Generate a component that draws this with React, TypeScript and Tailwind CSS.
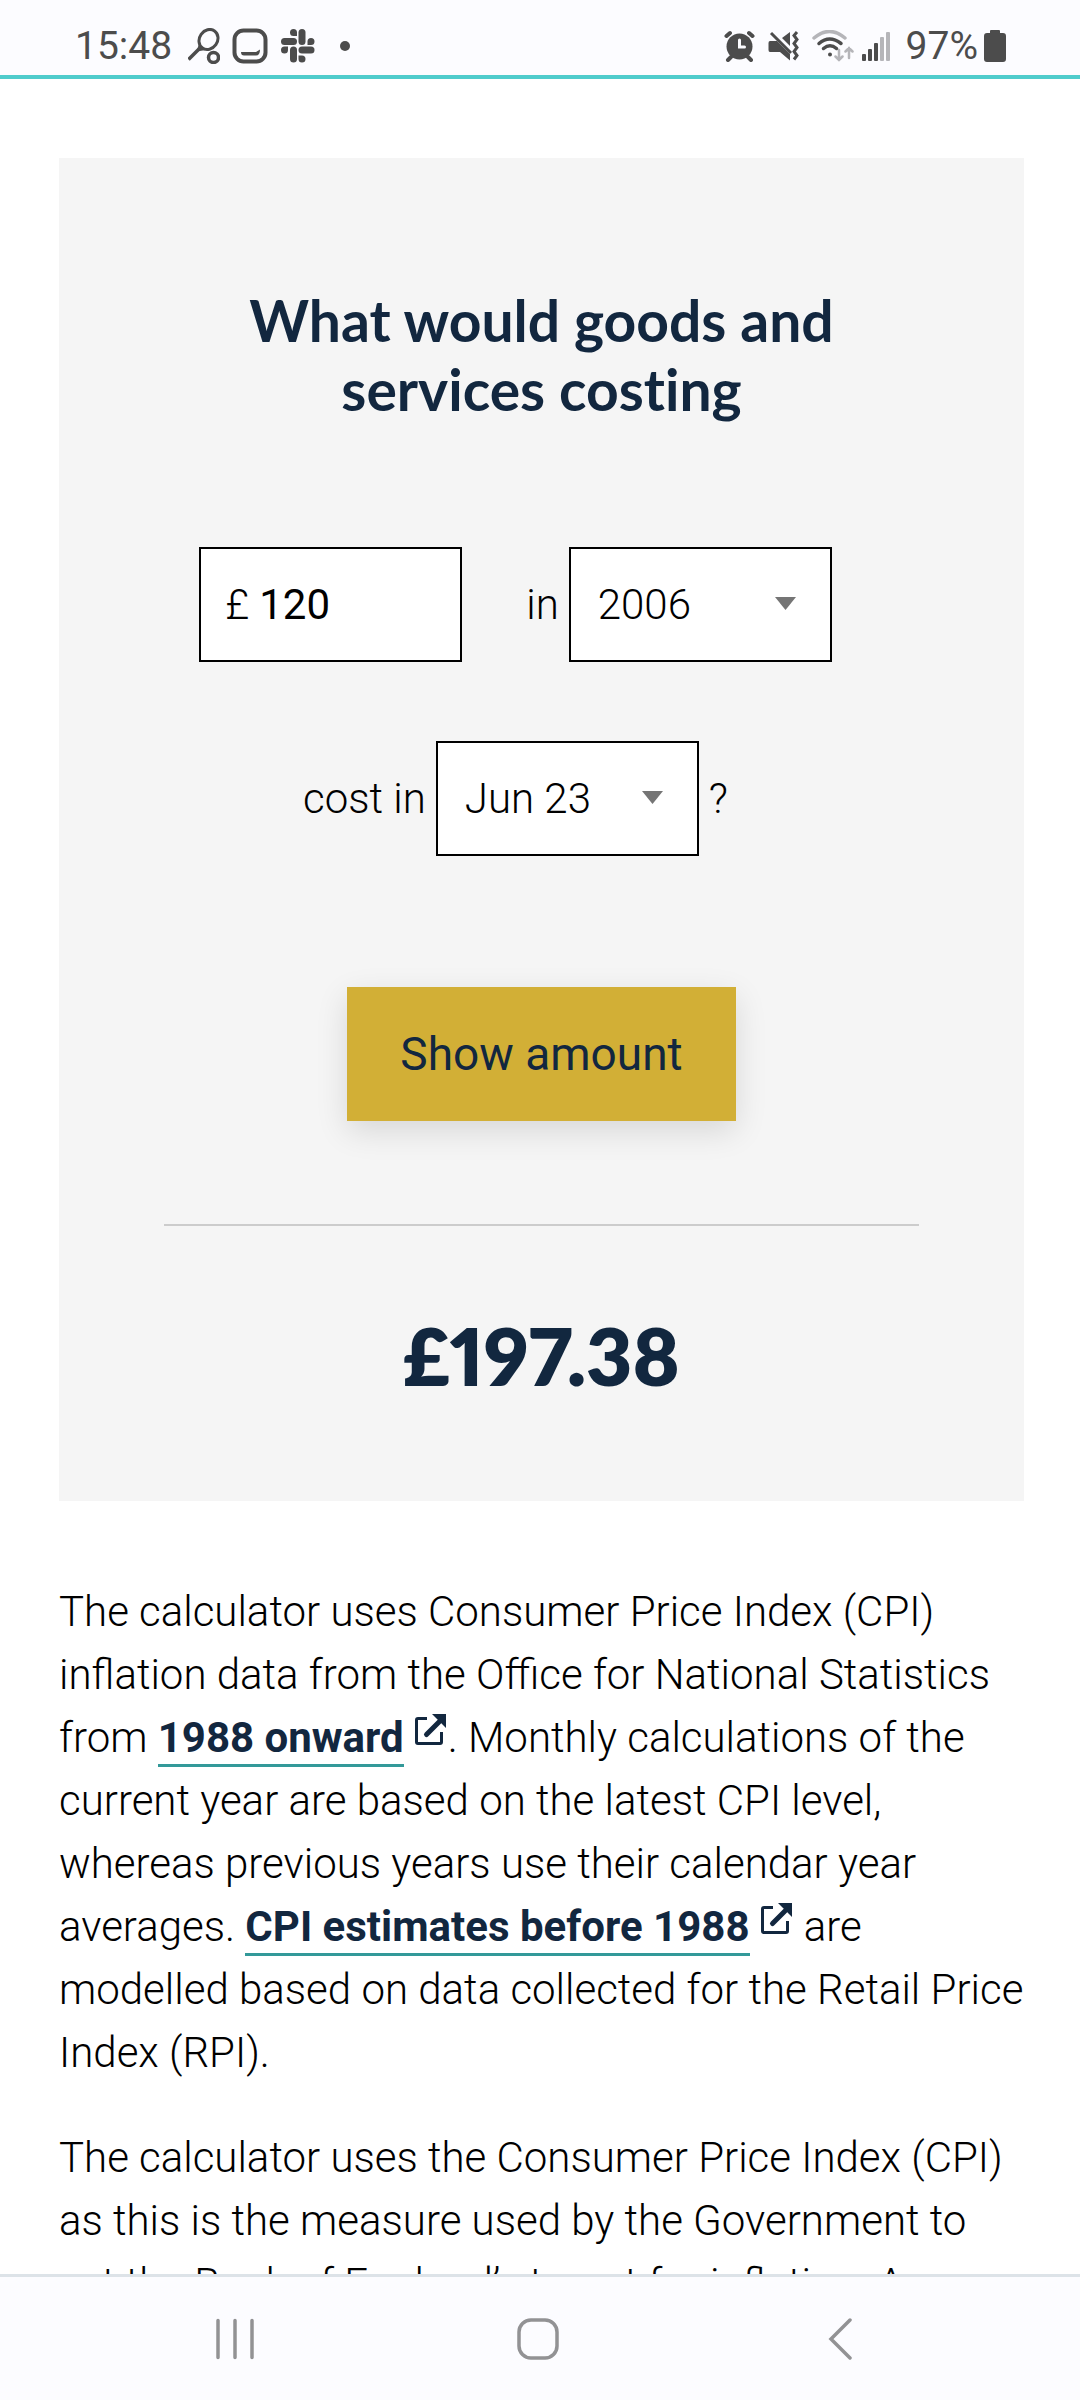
import type { ReactNode } from "react"

const months = ["Jun 23", "May 23", "Apr 23", "Mar 23"]
const years = ["2006", "2005", "2004", "2003"]

function StatusBar() {
  return (
    <header className="flex h-[79px] shrink-0 items-center justify-between border-b-4 border-[#50cccc] bg-[#fcfcff] pt-4 pr-[74px] pl-[75px] text-[#4c4c4c]">
      <div className="flex items-center">
        <span className="text-[39px] leading-[46px]">15:48</span>
        <svg className="ml-4 h-9 w-8" viewBox="0 0 32 36" fill="none" stroke="currentColor" strokeWidth="3">
          <ellipse cx="20.5" cy="11.5" rx="9" ry="10.5" transform="rotate(35 20.5 11.5)" />
          <path d="M12.5 19.5 0.5 31.5" strokeWidth="3.5" />
          <path d="M8.5 23.5 11 16l7 6z" fill="currentColor" strokeWidth="0" />
          <circle cx="25.5" cy="29.5" r="5" strokeWidth="3.5" />
        </svg>
        <svg className="ml-3 h-9 w-9" viewBox="0 0 36 36" fill="none" stroke="currentColor">
          <rect x="2.5" y="2.5" width="31" height="31" rx="9" strokeWidth="4" />
          <path d="M9 24h15l4-2.5q0 6-4 6H12q-3 0-3-3.5z" fill="currentColor" strokeWidth="0" />
        </svg>
        <svg className="ml-3 h-9 w-9" viewBox="0 0 36 36" fill="currentColor">
          <rect x="18.5" y="1" width="7" height="16" rx="3.5" />
          <rect x="1" y="10" width="16" height="7" rx="3.5" />
          <rect x="10" y="18.5" width="7" height="16" rx="3.5" />
          <rect x="18.5" y="18.5" width="16" height="7" rx="3.5" />
          <path d="M17 8V4.5A3.5 3.5 0 1 0 13.5 8zM27.5 17H31a3.5 3.5 0 1 0-3.5-3.5zM8 18.5H4.5A3.5 3.5 0 1 0 8 22zM18.5 27.5V31a3.5 3.5 0 1 0 3.5-3.5z" />
        </svg>
        <span className="ml-6 size-[10px] rounded-full bg-[#4c4c4c]" />
      </div>
      <div className="flex items-center">
        <svg className="h-8 w-8" viewBox="0 0 32 32" fill="none" stroke="currentColor" strokeLinecap="round">
          <circle cx="15.5" cy="16.5" r="13" fill="currentColor" strokeWidth="0" />
          <path d="M2.5 6 6 3M28.5 6 25 3M7 27l-3 3M24 27l3 3" strokeWidth="4" />
          <path d="M15.5 10v7h5" stroke="#fcfcff" strokeWidth="3" />
        </svg>
        <svg className="ml-3 h-8 w-8" viewBox="0 0 32 32">
          <path d="M14 8 22 2v14zM2 11h7l13 13v6.5L12 22H2q-1.5 0-1.5-2v-7q0-2 1.5-2z" fill="currentColor" />
          <path d="m3 3 20 20" stroke="currentColor" strokeWidth="3" />
          <path d="m29 2-3 3.5 3 4-3 4 3 4-3 4 3 4-3 4" fill="none" stroke="currentColor" strokeWidth="3" />
        </svg>
        <svg className="ml-3 h-8 w-[42px]" viewBox="0 0 42 32" fill="none" stroke="currentColor" strokeWidth="3.5" strokeLinecap="round">
          <path d="M2 8q15.5-13 31 0" stroke="#b5b5b9" />
          <path d="M7 13.5q10.5-9 22 0M11.5 18.5q6.5-5.5 13 0" />
          <circle cx="18" cy="24.5" r="2" fill="currentColor" strokeWidth="0" />
          <path d="M27 20v10m-3.5-3.5 3.5 3.5 3.5-3.5M37 28V18m-3.5 3.5L37 18l3.5 3.5" stroke="#b5b5b9" strokeWidth="2.5" />
        </svg>
        <svg className="ml-2 h-8 w-7" viewBox="0 0 28 32" fill="currentColor">
          <rect x="0" y="24" width="4" height="7" rx="1" />
          <rect x="6" y="19" width="4" height="12" rx="1" />
          <rect x="12" y="13" width="4" height="18" rx="1" />
          <rect x="18" y="7" width="4" height="24" rx="1" fill="#b5b5b9" />
          <rect x="24" y="2" width="4" height="29" rx="1" fill="#b5b5b9" />
        </svg>
        <span className="ml-4 text-[39px] leading-[46px]">97%</span>
        <svg className="ml-1.5 h-8 w-[22px]" viewBox="0 0 22 32" fill="currentColor">
          <path d="M6 3V1q0-1 1-1h8q1 0 1 1v2h3q3 0 3 3v23q0 3-3 3H3q-3 0-3-3V6q0-3 3-3z" />
        </svg>
      </div>
    </header>
  )
}

function SelectBox({ label, options }: { label: string; options: string[] }) {
  return (
    <div className="relative">
      <select
        aria-label={label}
        className="h-[115px] w-[263px] appearance-none border-2 border-black bg-white pr-16 pl-[27px] font-light text-black"
      >
        {options.map((option) => (
          <option key={option}>{option}</option>
        ))}
      </select>
      <svg className="pointer-events-none absolute top-[50px] right-9 h-[13px] w-[21px]" viewBox="0 0 21 13" fill="#757575">
        <path d="M0 0h21L10.5 13z" />
      </svg>
    </div>
  )
}

function ExternalLink({ href, children }: { href: string; children: ReactNode }) {
  return (
    <a href={href} className="font-bold text-[#12273f]">
      <span className="border-b-3 border-[#339999] pb-0.5">{children}</span>
      <svg className="mr-0.5 ml-2.5 inline-block h-8 w-8 align-[6px]" viewBox="0 0 32 32" fill="none" stroke="currentColor" strokeWidth="3">
        <path d="M13 4.5H4Q2.5 4.5 2.5 6v22q0 1.5 1.5 1.5h22q1.5 0 1.5-1.5V18" />
        <path d="M12.5 20.5 25 8" strokeWidth="5" strokeLinecap="round" />
        <path d="M18 0h14v14z" fill="currentColor" strokeWidth="0" />
      </svg>
    </a>
  )
}

function Calculator() {
  return (
    <form className="bg-[#f5f5f5] px-[105px] pt-32 pb-[101px]" onSubmit={(e) => e.preventDefault()}>
      <h2 className="text-center font-[Lato,sans-serif] text-[57px] leading-[69px] font-bold text-[#12273f] [font-variant-ligatures:none]">
        What would goods and
        <br />
        services costing
      </h2>

      <div className="mt-[123px] flex items-center justify-center pr-[52px]">
        <label className="flex h-[115px] w-[263px] items-center gap-2.5 border-2 border-black bg-white pl-6">
          £
          <input type="text" aria-label="Amount" defaultValue="120" className="w-40 font-normal text-black outline-none" />
        </label>
        <span className="mr-2.5 ml-16">in</span>
        <SelectBox label="Start year" options={years} />
      </div>

      <div className="mt-[79px] flex items-center justify-center pr-[52px]">
        <span className="mr-2.5">cost in</span>
        <SelectBox label="End month" options={months} />
        <span className="ml-2.5">?</span>
      </div>

      <div className="mt-[131px] flex justify-center">
        <button
          type="submit"
          className="h-[134px] bg-[#d2af36] px-[53px] text-[46px] leading-[56px] font-normal text-[#12273f] shadow-[0_10px_30px_rgba(0,0,0,0.12)]"
        >
          Show amount
        </button>
      </div>

      <hr className="mt-[103px] border-t-2 border-[#cccccc]" />

      <output className="mt-[84px] block text-center font-[Lato,sans-serif] text-[80px] leading-[90px] font-extrabold text-[#12273f] proportional-nums">
        £197.38
      </output>
    </form>
  )
}

function NavBar() {
  return (
    <nav className="flex h-[126px] shrink-0 items-center justify-between border-t-3 border-[#dde3e8] bg-[#fcfcff] pr-[218px] pl-[214px] text-[#929294]">
      <button type="button" aria-label="Recent apps">
        <svg className="h-[42px] w-[42px]" viewBox="0 0 42 42" stroke="currentColor" strokeWidth="3.5" strokeLinecap="round">
          <path d="M4 2.5v37M21 2.5v37M38 2.5v37" />
        </svg>
      </button>
      <button type="button" aria-label="Home">
        <svg className="h-[42px] w-[42px]" viewBox="0 0 42 42" fill="none" stroke="currentColor" strokeWidth="3.5">
          <rect x="2" y="2" width="38" height="38" rx="12" />
        </svg>
      </button>
      <button type="button" aria-label="Back">
        <svg className="h-[42px] w-[42px]" viewBox="0 0 42 42" fill="none" stroke="currentColor" strokeWidth="3.5" strokeLinecap="round">
          <path d="M30 2 11 21l19 19" />
        </svg>
      </button>
    </nav>
  )
}

export default function App() {
  return (
    <div className="flex h-screen flex-col bg-white font-[Roboto,sans-serif]">
      <StatusBar />
      <main className="min-h-0 flex-1 overflow-y-auto pt-[79px] pr-[56px] pl-[59px] text-[42px] leading-[63px] font-light text-black [scrollbar-width:none]">
        <Calculator />
        <p className="mt-[79px]">
          The calculator uses Consumer Price Index (CPI) inflation data from the Office for National Statistics from{" "}
          <ExternalLink href="#onward">1988 onward</ExternalLink>. Monthly calculations of the current year are based on
          the latest CPI level, whereas previous years use their calendar year averages.{" "}
          <ExternalLink href="#estimates">CPI estimates before 1988</ExternalLink> are modelled based on data collected
          for the Retail Price Index (RPI).
        </p>
        <p className="mt-[42px]">
          The calculator uses the Consumer Price Index (CPI) as this is the measure used by the Government to set the
          Bank of England’s target for inflation. A
        </p>
      </main>
      <NavBar />
    </div>
  )
}
